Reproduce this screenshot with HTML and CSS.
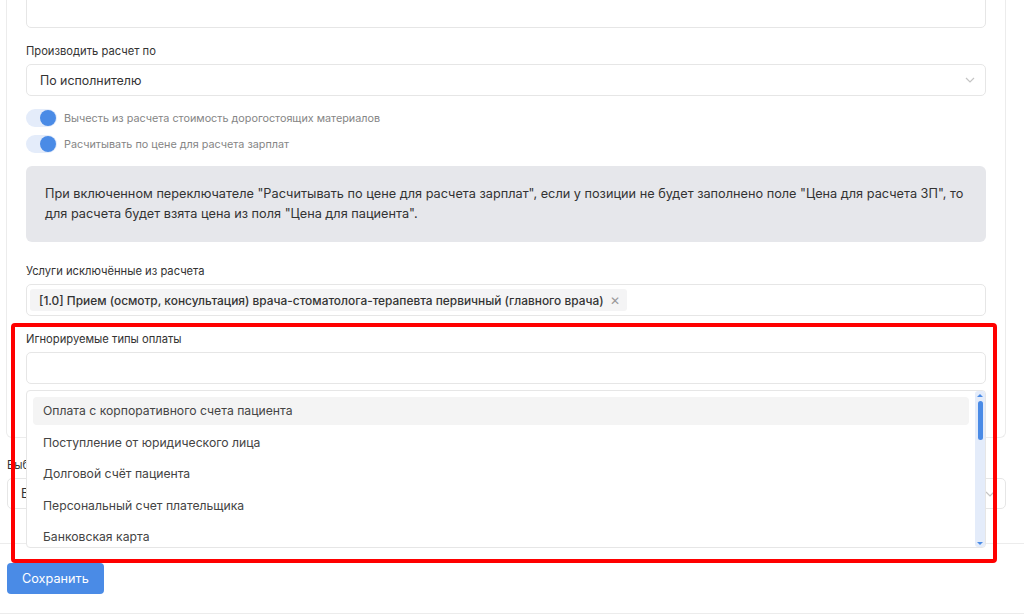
FILE: index.html
```html
<!DOCTYPE html>
<html lang="ru">
<head>
    <meta charset="UTF-8">
    <meta name="viewport" content="width=device-width, initial-scale=1.0">
    <title>Настройки расчета</title>
    <link rel="stylesheet" href="styles.css">
</head>
<body>
    <div class="page">
        <div class="card">
            <div class="field field-top">
                <textarea class="textarea"></textarea>
            </div>

            <div class="field">
                <label class="label">Производить расчет по</label>
                <div class="select">
                    <span>По исполнителю</span>
                    <svg class="chevron" width="10" height="6" viewBox="0 0 10 6"><path d="M1 1l4 4 4-4" fill="none" stroke="#c4c4c4" stroke-width="1.2"/></svg>
                </div>
            </div>

            <div class="switches">
                <div class="switch-row">
                    <span class="switch"><span class="knob"></span></span>
                    <span>Вычесть из расчета стоимость дорогостоящих материалов</span>
                </div>
                <div class="switch-row">
                    <span class="switch"><span class="knob"></span></span>
                    <span>Расчитывать по цене для расчета зарплат</span>
                </div>
            </div>

            <div class="notice">
                При включенном переключателе "Расчитывать по цене для расчета зарплат", если у позиции не будет заполнено поле "Цена для расчета ЗП", то для расчета будет взята цена из поля "Цена для пациента".
            </div>

            <div class="field">
                <label class="label">Услуги исключённые из расчета</label>
                <div class="multiselect">
                    <span class="chip">[1.0] Прием (осмотр, консультация) врача-стоматолога-терапевта первичный (главного врача)<span class="chip-close">&#x2715;</span></span>
                </div>
            </div>

            <div class="field field-ignored">
                <label class="label">Игнорируемые типы оплаты</label>
                <div class="multiselect"></div>

                <div class="dropdown">
                    <ul class="options">
                        <li class="option active">Оплата с корпоративного счета пациента</li>
                        <li class="option">Поступление от юридического лица</li>
                        <li class="option">Долговой счёт пациента</li>
                        <li class="option">Персональный счет плательщика</li>
                        <li class="option">Банковская карта</li>
                    </ul>
                    <div class="scrollbar">
                        <span class="arrow-up"></span>
                        <span class="thumb"></span>
                        <span class="track-rest"></span>
                        <span class="arrow-down"></span>
                    </div>
                </div>

                <div class="highlight"></div>
            </div>
        </div>

        <div class="field field-outside">
            <label class="label">Выбор</label>
            <div class="select">
                <span>В</span>
                <svg class="chevron" width="10" height="6" viewBox="0 0 10 6"><path d="M1 1l4 4 4-4" fill="none" stroke="#c4c4c4" stroke-width="1.2"/></svg>
            </div>
        </div>
    </div>

    <div class="footer">
        <button class="btn-save">Сохранить</button>
    </div>
</body>
</html>
```

FILE: styles.css
```css
* {
    box-sizing: border-box;
}
body {
    margin: 0;
    font-family: Inter, "Noto Sans", sans-serif;
    color: #333;
    background: #fff;
    overflow: hidden;
}
.page {
    padding: 0 18px 0 7px;
}
.card {
    margin: -20px 0 0 -1px;
    padding: 0 19px 53px;
    border: 1px solid #ececec;
    border-top: none;
    border-radius: 0 0 6px 6px;
}
.field {
    margin-bottom: 15px;
}
.textarea {
    display: block;
    width: 100%;
    height: 48px;
    border: 1px solid #e6e6e6;
    border-radius: 5px;
    resize: none;
    font-family: inherit;
}
.label {
    display: block;
    font-size: 11.2px;
    line-height: 16px;
    color: #333;
    margin-bottom: 5px;
}
.select {
    display: flex;
    align-items: center;
    justify-content: space-between;
    height: 32px;
    padding: 0 10px 0 13px;
    border: 1px solid #e6e6e6;
    border-radius: 5px;
    font-size: 12.4px;
    color: #333;
}
.switches {
    margin: -2px 0 13px;
}
.switch-row {
    display: flex;
    align-items: center;
    gap: 7px;
    height: 18px;
    margin-bottom: 8px;
    font-size: 10.8px;
    color: #858585;
}
.switch-row:last-child {
    margin-bottom: 0;
}
.switch {
    display: flex;
    justify-content: flex-end;
    align-items: center;
    width: 31px;
    height: 18px;
    padding: 0 1px;
    border-radius: 9px;
    background: #e4ecfa;
}
.knob {
    width: 16px;
    height: 16px;
    border-radius: 50%;
    background: #4a8be6;
}
.notice {
    padding: 18px 19px;
    margin-bottom: 21px;
    background: #e6e7eb;
    border-radius: 6px;
    font-size: 12.72px;
    line-height: 20px;
    color: #333;
}
.multiselect {
    display: flex;
    align-items: center;
    height: 32px;
    padding: 0 3px;
    border: 1px solid #e6e6e6;
    border-radius: 5px;
}
.chip {
    display: inline-flex;
    align-items: center;
    gap: 6px;
    height: 22px;
    padding: 0 7px 0 9px;
    background: #f4f4f5;
    border-radius: 3px;
    font-size: 11.9px;
    font-weight: 500;
    color: #333;
}
.chip-close {
    font-size: 12px;
    color: #999;
    font-weight: 400;
}
.field-ignored {
    position: relative;
    margin-bottom: 0;
}
.dropdown {
    position: absolute;
    top: calc(100% + 6px);
    left: 0;
    right: 0;
    height: 158px;
    display: flex;
    background: #fff;
    border: 1px solid #e6e6e6;
    border-radius: 4px;
    z-index: 5;
}
.options {
    flex: 1;
    list-style: none;
    margin: 0;
    padding: 6px 6px 0;
    overflow: hidden;
}
.option {
    height: 28px;
    line-height: 28px;
    margin-bottom: 3.5px;
    padding-left: 10px;
    border-radius: 4px;
    font-size: 12.2px;
    color: #444;
}
.option.active {
    background: #f4f4f4;
}
.scrollbar {
    display: flex;
    flex-direction: column;
    align-items: center;
    width: 10px;
    padding: 3px 0 2px;
    background: #e4ecfa;
    border-radius: 3px;
}
.arrow-up, .arrow-down {
    width: 0;
    height: 0;
    border-left: 3px solid transparent;
    border-right: 3px solid transparent;
}
.arrow-up {
    border-bottom: 3px solid #4a8be6;
}
.arrow-down {
    border-top: 3px solid #4a8be6;
}
.thumb {
    width: 5px;
    height: 39px;
    margin-top: 4px;
    border-radius: 3px;
    background: #4a8be6;
}
.track-rest {
    flex: 1;
}
.highlight {
    position: absolute;
    top: -8px;
    left: -15px;
    width: 986px;
    height: 240px;
    border: 4px solid #f00;
    border-radius: 4px;
    z-index: 6;
    pointer-events: none;
}
.field-outside {
    margin: 19px 0 34px;
}
.field-outside .select {
    height: 31px;
}
.footer {
    padding: 19px 7px 19px;
    border-top: 1px solid #ececec;
    border-bottom: 1px solid #ececec;
}
.btn-save {
    height: 31px;
    padding: 0 15px;
    border: none;
    border-radius: 4px;
    background: #4a8be6;
    color: #fff;
    font-family: inherit;
    font-size: 12.7px;
    cursor: pointer;
}
```
